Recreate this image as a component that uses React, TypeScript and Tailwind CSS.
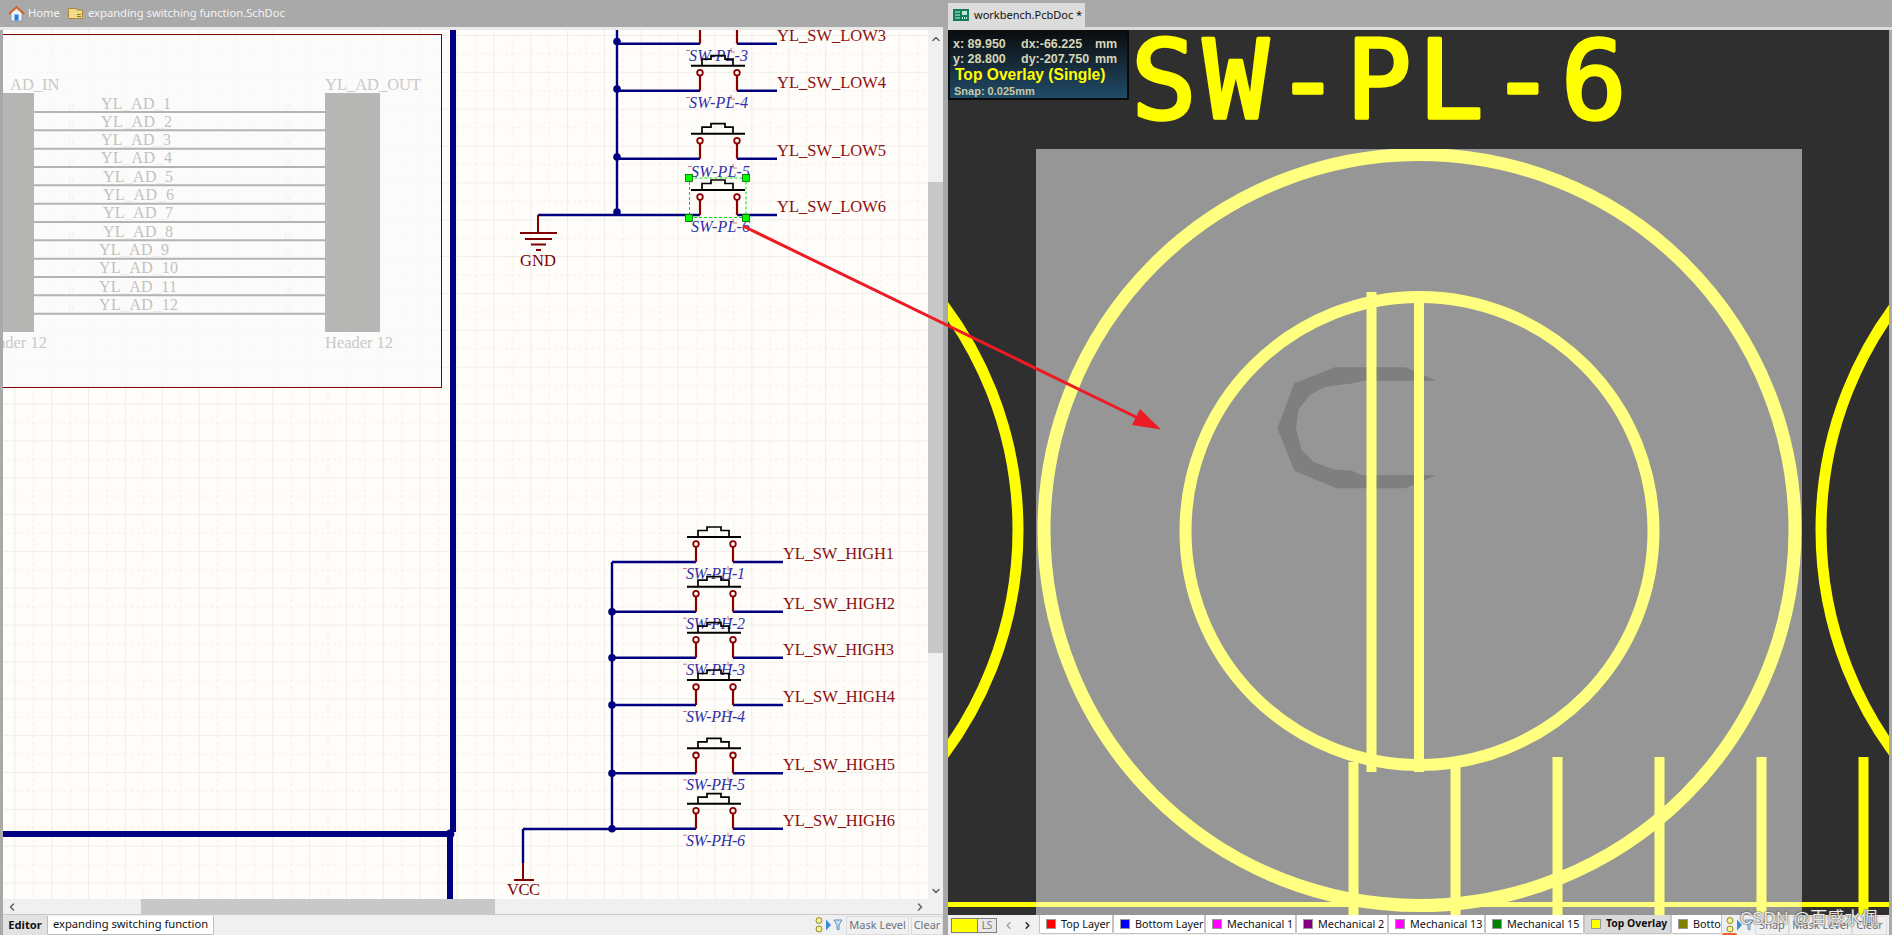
import React from 'react';
import { ChevronUp, ChevronDown, ChevronLeft, ChevronRight } from 'lucide-react';

const SERIF = "'Liberation Serif', 'Times New Roman', serif";
const NAVY = '#000080';
const MAROON = '#800000';

// Schematic data, coordinates are page pixels (the svg viewBox starts at the canvas corner)
const adRows = [
  { n: 1, x: 101, len: 70 }, { n: 2, x: 101, len: 71 }, { n: 3, x: 101, len: 70 }, { n: 4, x: 101, len: 71 },
  { n: 5, x: 103, len: 70 }, { n: 6, x: 103, len: 71 }, { n: 7, x: 103, len: 70 }, { n: 8, x: 103, len: 70 },
  { n: 9, x: 99, len: 70 }, { n: 10, x: 99, len: 79 }, { n: 11, x: 99, len: 78 }, { n: 12, x: 99, len: 79 },
];

const lowSwitches = [
  { wire: 43.7, text: 'YL_SW_LOW3', ref: 'SW-PL-3', refX: 689, refY: 61, textLen: 109 },
  { wire: 90.7, text: 'YL_SW_LOW4', ref: 'SW-PL-4', refX: 689, refY: 108, textLen: 109 },
  { wire: 158.7, text: 'YL_SW_LOW5', ref: 'SW-PL-5', refX: 691, refY: 177, textLen: 109 },
  { wire: 215, text: 'YL_SW_LOW6', ref: 'SW-PL-6', refX: 691, refY: 232, textLen: 109 },
];

const highSwitches = [
  { wire: 562, text: 'YL_SW_HIGH1', ref: 'SW-PH-1', textLen: 111 },
  { wire: 611.7, text: 'YL_SW_HIGH2', ref: 'SW-PH-2', textLen: 112 },
  { wire: 657.7, text: 'YL_SW_HIGH3', ref: 'SW-PH-3', textLen: 111 },
  { wire: 705, text: 'YL_SW_HIGH4', ref: 'SW-PH-4', textLen: 112 },
  { wire: 773.3, text: 'YL_SW_HIGH5', ref: 'SW-PH-5', textLen: 112 },
  { wire: 828.7, text: 'YL_SW_HIGH6', ref: 'SW-PH-6', textLen: 112 },
];

const layerTabs = [
  { name: 'Top Layer', color: 'bg-[#ff0000]', width: 'w-[74px]' },
  { name: 'Bottom Layer', color: 'bg-[#0000ff]', width: 'w-[92px]' },
  { name: 'Mechanical 1', color: 'bg-[#ff00ff]', width: 'w-[91px]' },
  { name: 'Mechanical 2', color: 'bg-[#800080]', width: 'w-[92px]' },
  { name: 'Mechanical 13', color: 'bg-[#ff00ff]', width: 'w-[97px]' },
  { name: 'Mechanical 15', color: 'bg-[#008000]', width: 'w-[99px]' },
  { name: 'Top Overlay', color: 'bg-[#ffff00]', width: 'w-[87px]', active: true },
  { name: 'Bottom Overlay', color: 'bg-[#808000]', width: 'w-[51px]' },
];

type SwitchProps = {
  pin: number;
  busX: number;
  wire: number;
  text: string;
  textX: number;
  textLen: number;
  refName: string;
  refX: number;
  refY: number;
};

const PushSwitch = ({ pin, busX, wire, text, textX, textLen, refName, refX, refY }: SwitchProps) => {
  const right = pin + 37;
  return (
    <g>
      <path d={`M${busX} ${wire}H${pin}M${right} ${wire}H${textX}`} stroke={NAVY} strokeWidth="2.4" fill="none" />
      <path d={`M${pin} ${wire}V${wire - 15}M${right} ${wire}V${wire - 15}`} stroke="#8b0000" strokeWidth="2.2" />
      <circle cx={pin} cy={wire - 18} r="2.8" fill="none" stroke="#8b0000" strokeWidth="1.8" />
      <circle cx={right} cy={wire - 18} r="2.8" fill="none" stroke="#8b0000" strokeWidth="1.8" />
      <path d={`M${pin - 9} ${wire - 25}H${pin + 45}`} stroke="#000" strokeWidth="2" />
      <path
        d={`M${pin + 2} ${wire - 25}V${wire - 31.5}H${pin + 11}V${wire - 35}H${pin + 25}V${wire - 31.5}H${pin + 33}V${wire - 25}`}
        stroke="#000"
        strokeWidth="1.7"
        fill="none"
      />
      <path
        d={`M${refX - 3} ${refY - 10.5}H${refX + 1}M${refX + 42} ${refY - 13}V${refY - 9}H${refX + 46}`}
        stroke="#c47a7a"
        strokeWidth="1"
        fill="none"
      />
      <text x={refX} y={refY} fontFamily={SERIF} fontStyle="italic" fontSize="16" fill="#3030a8" textLength="59">
        {refName}
      </text>
      <text x={textX} y={wire - 3} fontFamily={SERIF} fontSize="16.5" fill="#8b1010" textLength={textLen}>
        {text}
      </text>
    </g>
  );
};

const SchematicCanvas = () => (
  <svg viewBox="3 30 925 869" className="block h-[869px] w-[925px] shrink-0">
    <defs>
      <pattern id="sheetGrid" x="14.3" y="35" width="36.85" height="36.85" patternUnits="userSpaceOnUse">
        <path d="M0.5 0V36.85M0 0.5H36.85" stroke="#efeee8" strokeWidth="1.2" fill="none" />
        <path d="M18.9 0V36.85M0 18.9H36.85" stroke="#f0efe9" strokeWidth="1" strokeDasharray="3 3" fill="none" />
      </pattern>
    </defs>
    <rect x="3" y="30" width="925" height="869" fill="#fffdf9" />
    <rect x="3" y="30" width="925" height="869" fill="url(#sheetGrid)" />

    {/* dimmed sheet symbol */}
    <rect x="-4.5" y="34.5" width="446" height="353" fill="#fbfafb" fillOpacity="0.8" stroke={MAROON} strokeWidth="1" />
    <rect x="3" y="93" width="31" height="239" fill="#b5b5b4" />
    <rect x="325" y="93" width="55" height="239" fill="#b7b7b6" />
    <g fontFamily={SERIF} fill="#c9c9c5">
      <text x="10" y="90" fontSize="16.5">AD_IN</text>
      <text x="325" y="90" fontSize="16.5" textLength="96">YL_AD_OUT</text>
      <text x="47" y="348" fontSize="16.5" textAnchor="end">Header 12</text>
      <text x="325" y="348" fontSize="16.5" textLength="68">Header 12</text>
    </g>
    {adRows.map((row, i) => {
      const y = 112 + i * 18.33;
      return (
        <g key={row.n}>
          <path d={`M34 ${y}H325`} stroke="#b3b3b3" strokeWidth="2" />
          <path d={`M69.5 ${y - 3}V${y - 8}M73 ${y - 3}V${y - 8}M286 ${y - 3}V${y - 8}M289.5 ${y - 3}V${y - 8}`} stroke="#eeeef0" strokeWidth="1" />
          <text x={row.x} y={y - 3.5} fontFamily={SERIF} fontSize="16" fill="#c2c2bd" textLength={row.len}>
            YL<tspan fill="#ecebea">_</tspan>AD<tspan fill="#ecebea">_</tspan>{row.n}
          </text>
        </g>
      );
    })}

    {/* main bus */}
    <path d="M453 30V832M0 834H450M450 832V899" stroke={NAVY} strokeWidth="6" fill="none" />
    <circle cx="450" cy="834" r="4.5" fill={NAVY} />

    {/* low side */}
    <path d="M617 30V215M538 215H617" stroke={NAVY} strokeWidth="2.4" fill="none" />
    {[41.5, 89, 157, 212].map((y) => (
      <circle key={y} cx="617" cy={y} r="3.8" fill={NAVY} />
    ))}
    {lowSwitches.map((s) => (
      <PushSwitch key={s.ref} pin={700} busX={617} wire={s.wire} text={s.text} textX={777} textLen={s.textLen} refName={s.ref} refX={s.refX} refY={s.refY} />
    ))}
    <path d="M538 215V233M520 233H557M525 239H552M531 244.5H546M536 250H541" stroke={MAROON} strokeWidth="2" fill="none" />
    <text x="520" y="266" fontFamily={SERIF} fontSize="16.5" fill={MAROON} textLength="36">GND</text>

    {/* selection of SW-PL-6 */}
    <rect x="689.5" y="178" width="56.5" height="39.5" fill="none" stroke="#00e000" strokeWidth="1" strokeDasharray="3 2" />
    {[[689, 178], [746, 178], [689, 218], [746, 218]].map(([x, y]) => (
      <rect key={`${x}-${y}`} x={x - 3.5} y={y - 3.5} width="7" height="7" fill="#00ff00" stroke="#006600" strokeWidth="0.8" />
    ))}

    {/* high side */}
    <path d="M612 562V829M523 829H612M523 829V863" stroke={NAVY} strokeWidth="2.4" fill="none" />
    {[611.7, 657.7, 705, 773.3, 828.7].map((y) => (
      <circle key={y} cx="612" cy={y} r="3.8" fill={NAVY} />
    ))}
    {highSwitches.map((s) => (
      <PushSwitch key={s.ref} pin={696} busX={612} wire={s.wire} text={s.text} textX={783} textLen={s.textLen} refName={s.ref} refX={686} refY={s.wire + 17} />
    ))}
    <path d="M523 863V880M514 880H534" stroke={MAROON} strokeWidth="2" fill="none" />
    <text x="507" y="895" fontFamily={SERIF} fontSize="16.5" fill={MAROON} textLength="33">VCC</text>
  </svg>
);

const PcbCanvas = () => (
  <svg viewBox="948 30 941 885" className="block h-[885px] w-[941px]">
    <defs>
      <clipPath id="boardCut">
        <rect x="1036" y="149" width="766" height="766" />
      </clipPath>
    </defs>
    <rect x="948" y="30" width="941" height="885" fill="#2f2f2f" />

    <text
      x="1131 1203 1275 1346 1418 1490 1561"
      y="117.500"
      fontFamily="'DejaVu Sans Mono', monospace"
      fontSize="109"
      fill="#ffff00"
      stroke="#ffff00"
      strokeWidth="3.500"
      strokeLinejoin="round"
    >
      SW-PL-6
    </text>

    {/* side footprints */}
    <circle cx="642" cy="530" r="376" fill="none" stroke="#ffff00" strokeWidth="11" />
    <circle cx="2197" cy="530" r="376" fill="none" stroke="#ffff00" strokeWidth="11" />
    <path d="M948 904.5H1889" stroke="#ffff00" strokeWidth="5" fill="none" />
    <path d="M1863.5 757V915" stroke="#ffff00" strokeWidth="10" fill="none" />

    <rect x="1036" y="149" width="766" height="766" fill="#969696" />
    <path
      transform="translate(1260 340) scale(0.3333)"
      d="M530 122L437 82H225L103 130L52 265L103 392L230 445H437L528 405H305L275 392L220 388L160 365L125 330L108 265L115 210L150 165L195 140L280 130L310 122Z"
      fill="#7f7f7f"
    />

    <g stroke="#ffff80" fill="none" clipPath="url(#boardCut)">
      <path d="M948 904.5H1889" strokeWidth="5" />
      <circle cx="1419.5" cy="530" r="375.5" strokeWidth="13" />
      <circle cx="1419.5" cy="531" r="234" strokeWidth="12" />
      <path d="M1371.5 292V772M1419 292V772" strokeWidth="10" />
      <path d="M1353.5 762V915M1455.5 757V915M1557.5 757V915M1659.5 757V915M1761.5 757V915" strokeWidth="10" />
    </g>
  </svg>
);

const CoordinateHud = () => (
  <div className="absolute left-0 top-0 h-[70px] w-[181px] border-[2px] border-t-0 border-[#0b0b0b] bg-gradient-to-b from-[#0a0c0e] to-[#1f4c69] pl-[3px] font-['Liberation_Sans',sans-serif] font-bold leading-none">
    <div className="mt-[7px] grid grid-cols-[68px_74px_auto] text-[12.5px] leading-[15px] text-[#d6d6b6]">
      <span>x: 89.950</span>
      <span>dx:-66.225</span>
      <span>mm</span>
      <span>y: 28.800</span>
      <span>dy:-207.750</span>
      <span>mm</span>
    </div>
    <div className="ml-[2px] mt-[-1px] text-[15.6px] leading-[17px] text-[#ffff00]">Top Overlay (Single)</div>
    <div className="ml-[1px] mt-[2px] text-[11px] leading-[12px] text-[#c9c9a8]">Snap: 0.025mm</div>
  </div>
);

const MaskIcons = () => (
  <svg width="30" height="18" viewBox="0 0 30 18" className="shrink-0">
    <circle cx="6" cy="4.5" r="3" fill="#f5ef9a" stroke="#8f8a20" strokeWidth="1" />
    <circle cx="6" cy="13" r="3" fill="#f5ef9a" stroke="#8f8a20" strokeWidth="1" />
    <path d="M13 3.5L18 9L13 14.5Z" fill="#3a8ad8" />
    <path d="M21 4H29L26 9V14L24 13V9Z" fill="#cfe3f5" stroke="#5a8fc0" strokeWidth="1" />
  </svg>
);

const ToolButton = ({ label, width }: { label: string; width: string }) => (
  <div className={`flex h-[19px] shrink-0 items-center justify-center overflow-hidden whitespace-nowrap border border-[#dcdcdc] text-[11px] text-[#6c7280] ${width}`}>
    {label}
  </div>
);

const SchematicPane = () => (
  <div className="flex h-full w-[948px] shrink-0 flex-col">
    <div className="flex h-[27px] shrink-0 items-center text-[11.2px] text-[#f3f3f3]">
      <svg width="17" height="16" viewBox="0 0 17 16" className="ml-[8px] shrink-0">
        <path d="M3 7V15H14V7L8.500 2Z" fill="#e9f0f8" stroke="#7d93ad" strokeWidth="0.8" />
        <path d="M0.800 8L8.500 1L16.200 8" fill="none" stroke="#d9601c" strokeWidth="1.800" />
        <rect x="6.500" y="8.500" width="4" height="6" fill="#2a7de0" />
      </svg>
      <span className="ml-[3px] w-[40px]">Home</span>
      <svg width="15" height="11" viewBox="0 0 15 11" className="shrink-0">
        <path d="M0.500 0.500H8L9 2H14.500V10.500H0.500Z" fill="#f2dc86" stroke="#a8893a" strokeWidth="1" />
        <path d="M9 6.500H13M9 8.500H13" stroke="#8a7430" strokeWidth="1" />
      </svg>
      <span className="ml-[5px]">expanding switching function.SchDoc</span>
    </div>
    <div className="mr-[5px] h-[3px] shrink-0 bg-[#e9e9e7]" />
    <div className="flex h-[869px] shrink-0">
      <div className="w-[3px] shrink-0" />
      <SchematicCanvas />
      <div className="flex w-[15px] shrink-0 flex-col bg-[#f0f0f0]">
        <div className="flex h-[17px] items-center justify-center">
          <ChevronUp size={12} strokeWidth={3} color="#606060" />
        </div>
        <div className="h-[135px]" />
        <div className="h-[471px] bg-[#c8c8c8]" />
        <div className="flex-1" />
        <div className="flex h-[17px] items-center justify-center">
          <ChevronDown size={12} strokeWidth={3} color="#606060" />
        </div>
      </div>
    </div>
    <div className="ml-[3px] mr-[5px] flex h-[15px] shrink-0 bg-[#f0f0f0]">
      <div className="flex w-[17px] items-center justify-center">
        <ChevronLeft size={12} strokeWidth={3} color="#606060" />
      </div>
      <div className="w-[121px]" />
      <div className="w-[354px] bg-[#c8c8c8]" />
      <div className="flex-1" />
      <div className="mr-[15px] flex w-[17px] items-center justify-center">
        <ChevronRight size={12} strokeWidth={3} color="#606060" />
      </div>
    </div>
    <div className="ml-[3px] mr-[5px] flex h-[21px] shrink-0 items-center border-t border-[#c9c9c9] bg-[#f0f0f0] text-[11.2px]">
      <div className="flex h-full w-[44px] items-center justify-center bg-[#e2e2e2] font-bold text-[#111]">Editor</div>
      <div className="flex h-[19px] w-[167px] items-center justify-center whitespace-nowrap rounded-b-[2px] border border-t-0 border-[#bdbdbd] bg-white text-[#111]">
        expanding switching function
      </div>
      <div className="flex-1" />
      <MaskIcons />
      <div className="w-[3px]" />
      <ToolButton label="Mask Level" width="w-[63px]" />
      <div className="w-[2px]" />
      <ToolButton label="Clear" width="w-[32px]" />
    </div>
  </div>
);

const PcbPane = () => (
  <div className="flex h-full flex-1 flex-col">
    <div className="flex h-[27px] shrink-0 items-end">
      <div className="flex h-[24px] w-[137px] items-center whitespace-nowrap bg-[#dcdcdc] pl-[5px] text-[11px] text-[#111]">
        <svg width="16" height="12" viewBox="0 0 16 12" className="shrink-0">
          <rect width="16" height="12" fill="#0f7d5c" />
          <path d="M2 3H7M2 6H7M2 9H7" stroke="#cfeede" strokeWidth="1.200" />
          <rect x="9" y="2" width="5" height="4" fill="#bfe8d4" />
          <path d="M9 9H15" stroke="#cfeede" strokeWidth="2" strokeDasharray="1 1" />
        </svg>
        <span className="ml-[5px]">workbench.PcbDoc *</span>
      </div>
    </div>
    <div className="h-[3px] shrink-0 bg-[#dcdcdc]" />
    <div className="flex h-[885px] shrink-0">
      <div className="relative w-[941px] shrink-0">
        <PcbCanvas />
        <CoordinateHud />
      </div>
    </div>
    <div className="mr-[3px] flex h-[20px] shrink-0 items-center bg-[#f0f0f0] text-[10.8px] text-[#111]">
      <div className="ml-[3px] flex h-[15px] w-[46px] shrink-0 border border-[#808080]">
        <div className="w-[25px] bg-[#ffff00]" />
        <div className="flex-1 border-l border-[#808080] bg-[#e8e8e8] text-center text-[10px] leading-[13px] text-[#777]">LS</div>
      </div>
      <div className="flex w-[42px] shrink-0 items-center justify-between px-[6px]">
        <ChevronLeft size={11} strokeWidth={3} color="#a0a0a0" />
        <ChevronRight size={11} strokeWidth={3} color="#222" />
      </div>
      <div className="flex h-full w-[683px] shrink-0 overflow-hidden">
        {layerTabs.map((tab) => (
          <div
            key={tab.name}
            className={`flex h-[19px] shrink-0 items-center overflow-hidden whitespace-nowrap rounded-b-[2px] border border-t-0 border-[#c4c4c4] pl-[6px] ${tab.width} ${tab.active ? 'bg-[#dadada] text-[10.4px] font-bold' : 'bg-white'}`}
          >
            <span className={`mr-[5px] h-[10px] w-[10px] shrink-0 border border-[#999] ${tab.color}`} />
            {tab.name}
          </div>
        ))}
      </div>
      <div className="ml-[2px]">
        <MaskIcons />
      </div>
      <div className="w-[1px]" />
      <ToolButton label="Snap" width="w-[34px]" />
      <ToolButton label="Mask Level" width="w-[63px]" />
      <ToolButton label="Clear" width="w-[35px]" />
    </div>
  </div>
);

const App = () => (
  <div className="relative flex h-[935px] w-[1892px] overflow-hidden bg-[#a9a9a9] font-['Noto_Sans',sans-serif]">
    <SchematicPane />
    <PcbPane />

    {/* annotation arrow drawn across both panes */}
    <svg viewBox="0 0 1892 935" className="pointer-events-none absolute left-0 top-0 h-[935px] w-[1892px]">
      <path d="M743 226L1140 419" stroke="#ed1c24" strokeWidth="3" />
      <path d="M1161 429.500L1140 409L1132 425Z" fill="#ed1c24" />
    </svg>

    <div className="absolute left-[1740px] top-[908px] whitespace-nowrap font-['Liberation_Sans','Noto_Sans_CJK_SC',sans-serif] text-[17px] leading-[22px] text-white/90 [text-shadow:0_0_2px_#444,0_0_1px_#444]">
      CSDN @百感水佩
    </div>
    <div className="absolute left-[1722px] top-[933px] h-[2px] w-[15px] rounded-t-full bg-[#f0602a]" />
  </div>
);

export default App;
